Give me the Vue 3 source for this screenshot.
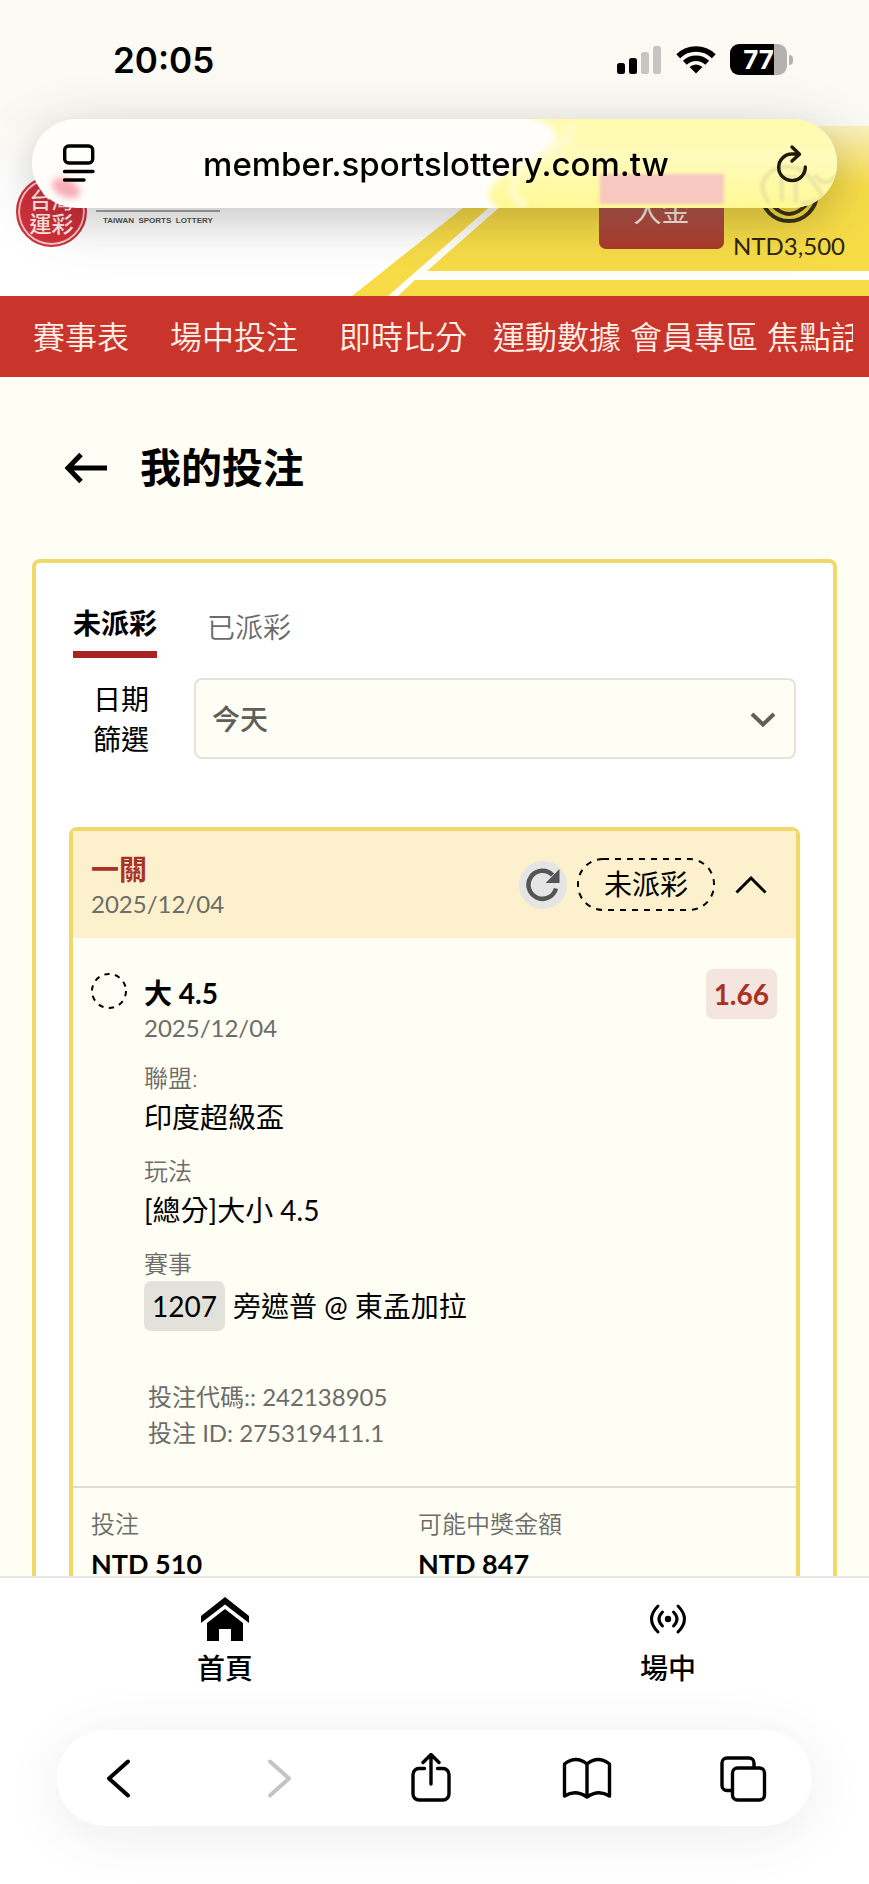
<script setup>
import { ref } from 'vue'

const navItems = [
  { label: '賽事表', space: 'wide' },
  { label: '場中投注', space: 'wide' },
  { label: '即時比分', space: 'medium' },
  { label: '運動數據', space: 'tight' },
  { label: '會員專區', space: 'tight' },
  { label: '焦點話題', space: 'tight' }
]

const tabs = ['未派彩', '已派彩']
const activeTab = ref('未派彩')
const dateRange = ref('今天')

const details = [
  { term: '聯盟:', value: '印度超級盃' },
  { term: '玩法', value: '[總分]大小 4.5' },
  { term: '賽事', code: '1207', value: '旁遮普 @ 東孟加拉' }
]

const amounts = [
  { label: '投注', value: 'NTD 510' },
  { label: '可能中獎金額', value: 'NTD 847' }
]
</script>

<template>
  <div class="screen">
    <div class="browser-top">
      <div class="status">
        <span class="clock">20:05</span>
        <div class="status-icons">
          <svg width="46" height="28" viewBox="0 0 46 28" aria-hidden="true">
            <rect x="1" y="17" width="8" height="11" rx="2.5" />
            <rect x="13" y="12" width="8" height="16" rx="2.5" />
            <rect x="25" y="6" width="8" height="22" rx="2.5" fill="#c6c5c1" />
            <rect x="37" y="0" width="8" height="28" rx="2.5" fill="#c6c5c1" />
          </svg>
          <svg width="40" height="29" viewBox="0 0 40 29" aria-hidden="true">
            <g fill="none" stroke="#000" stroke-width="5.4">
              <path d="M2.2 11.2a25.5 25.5 0 0 1 35.6 0" />
              <path d="M8.8 17.8a16 16 0 0 1 22.4 0" />
            </g>
            <path d="M20 28.6l-6.4-6.5a9.200 9.200 0 0 1 12.800 0z" />
          </svg>
          <div class="battery">
            <span class="battery-body">77</span>
            <span class="battery-cap"></span>
          </div>
        </div>
      </div>
      <div class="address">
        <svg class="address-tint" viewBox="0 0 804 89" preserveAspectRatio="xMaxYMid slice" aria-hidden="true">
          <defs>
            <filter id="soft" x="-20%" y="-20%" width="140%" height="140%"><feGaussianBlur stdDeviation="3" /></filter>
            <filter id="edge" x="-10%" y="-20%" width="120%" height="140%"><feGaussianBlur stdDeviation="1.5" /></filter>
            <linearGradient id="tint" x1="0" y1="0" x2="0" y2="1">
              <stop offset="0" stop-color="#fffaa8" />
              <stop offset=".45" stop-color="#fffcbc" />
              <stop offset="1" stop-color="#fff88e" />
            </linearGradient>
          </defs>
          <rect width="804" height="89" fill="#fffefb" />
          <g filter="url(#soft)">
            <path d="M478-8C530 6 534 18 508 34C490 48 455 58 456 78L470 98H820V-8z" fill="url(#tint)" />
            <path d="M535 4c18 16-46 40-54 60c-3 12 4 18 12 24" fill="none" stroke="#fffcd0" stroke-width="7" />
            <ellipse cx="34" cy="69" rx="15" ry="9" fill="#f8aeb8" transform="rotate(25 34 69)" />
          </g>
          <path d="M567 55h124v30H567z" fill="#f8c8c0" filter="url(#edge)" />
          <g fill="none" stroke="#e8e2a0" stroke-width="3.500" filter="url(#edge)">
            <path d="M736 84c-16-22 2-38 22-36c16 2 24 18 32 30c-4 6-14 6-22 6M749 82V58h14v26M782 56q10 14 22 0" />
          </g>
        </svg>
        <button class="icon-button page-button" type="button" aria-label="Page menu">
          <svg width="34" height="40" viewBox="0 0 34 40" fill="none" stroke="#000" stroke-width="3.400" stroke-linecap="round">
            <rect x="2.700" y="2" width="28" height="17" rx="4" />
            <path d="M2.500 27.500h28.500M2.500 36h19.500" />
          </svg>
        </button>
        <span class="url">member.sportslottery.com.tw</span>
        <button class="icon-button" type="button" aria-label="Reload">
          <svg width="32" height="40" viewBox="0 0 32 40" fill="none" stroke="#201a08" stroke-width="3.400" stroke-linecap="round" stroke-linejoin="round">
            <path d="M22.500 10H16A13.300 13.300 0 1 0 29.300 23M16 3l7.500 7.200L16 17" />
          </svg>
        </button>
      </div>
    </div>

    <header class="site-header">
      <svg class="banner" viewBox="0 0 869 170" preserveAspectRatio="xMaxYMax slice" aria-hidden="true">
        <path d="M352 170L566 0H869V170z" fill="#f7dc48" />
        <path d="M388 170L582 0H592L427 145H869V154H415L398 170z" fill="#fffef8" />
      </svg>
      <a class="brand" href="#">
        <span class="seal"><span>台灣</span><span>運彩</span></span>
        <span class="brand-name">TAIWAN&nbsp; SPORTS&nbsp; LOTTERY</span>
      </a>
      <div class="account">
        <button class="deposit" type="button">入金</button>
        <a class="balance" href="#">
          <svg width="60" height="60" viewBox="0 0 60 60" fill="none" stroke="#3c3413" stroke-width="4" aria-hidden="true">
            <circle cx="30" cy="30" r="28" />
            <path d="M13 42q17 18 34 0" />
          </svg>
          <span>NTD3,500</span>
        </a>
      </div>
    </header>

    <nav class="site-nav">
      <div class="site-nav-list">
        <a v-for="item in navItems" :key="item.label" href="#" :class="item.space">{{ item.label }}</a>
      </div>
    </nav>

    <main class="page">
      <div class="page-title">
        <button class="icon-button" type="button" aria-label="返回">
          <svg width="44" height="32" viewBox="0 0 44 32" fill="none" stroke="#000" stroke-width="5">
            <path d="M17 2.500L4 16l13 13.500M4 16h39" />
          </svg>
        </button>
        <h1>我的投注</h1>
      </div>

      <section class="card">
        <div class="tabs" role="tablist">
          <button
            v-for="tab in tabs"
            :key="tab"
            type="button"
            role="tab"
            :aria-selected="tab === activeTab"
            :class="['tab', { active: tab === activeTab }]"
            @click="activeTab = tab"
          >{{ tab }}</button>
        </div>

        <div class="filter">
          <label for="date-range">日期<br />篩選</label>
          <div class="select">
            <select id="date-range" v-model="dateRange">
              <option>今天</option>
              <option>昨天</option>
            </select>
            <svg width="26" height="16" viewBox="0 0 26 16" fill="none" stroke="#5e5e5a" stroke-width="4" aria-hidden="true">
              <path d="M2 2l11 10.500L24 2" />
            </svg>
          </div>
        </div>

        <article class="bet">
          <header class="bet-head">
            <div class="bet-name">
              <h2>一關</h2>
              <time>2025/12/04</time>
            </div>
            <button class="icon-button refresh" type="button" aria-label="重新整理">
              <svg width="34" height="34" viewBox="0 0 34 34">
                <path d="M30 20.500A14 14 0 1 1 26.500 7" fill="none" stroke="#555" stroke-width="4.500" />
                <path d="M33.500 1v14H19.500z" fill="#555" />
              </svg>
            </button>
            <span class="state">
              <svg class="state-outline" width="138" height="53" viewBox="0 0 138 53" fill="none" stroke="#000" stroke-width="2" stroke-dasharray="6 6" aria-hidden="true">
                <rect x="1" y="1" width="136" height="51" rx="25" />
              </svg>
              未派彩
            </span>
            <button class="icon-button collapse" type="button" aria-label="收合">
              <svg width="32" height="18" viewBox="0 0 32 18" fill="none" stroke="#000" stroke-width="3">
                <path d="M1.500 16.500L16 2l14.500 14.500" />
              </svg>
            </button>
          </header>

          <div class="bet-body">
            <svg class="pending" width="36" height="36" viewBox="0 0 36 36" fill="none" stroke="#000" stroke-width="2" aria-hidden="true">
              <circle cx="18" cy="18" r="17" stroke-dasharray="5.350 5.350" />
            </svg>
            <div class="bet-info">
              <h3>大 4.5</h3>
              <time>2025/12/04</time>
              <dl>
                <div v-for="row in details" :key="row.term">
                  <dt>{{ row.term }}</dt>
                  <dd :class="{ coded: row.code }"><span v-if="row.code" class="code">{{ row.code }}</span>{{ row.value }}</dd>
                </div>
              </dl>
              <p class="refs">投注代碼:: 242138905<br />投注 ID: 275319411.1</p>
            </div>
            <span class="odds">1.66</span>
          </div>

          <footer class="bet-foot">
            <div v-for="amount in amounts" :key="amount.label">
              <span>{{ amount.label }}</span>
              <strong>{{ amount.value }}</strong>
            </div>
          </footer>
        </article>
      </section>
    </main>

    <div class="bottom">
      <nav class="app-nav">
        <a href="#">
          <svg width="50" height="46" viewBox="0 0 50 46" aria-hidden="true">
            <path d="M1 20L25 1l24 19v7L25 8.500L1 27z" />
            <path d="M25 13L43 27v18H31V33H19v12H7V27z" />
          </svg>
          <span>首頁</span>
        </a>
        <a href="#">
          <svg width="50" height="46" viewBox="0 0 50 46" fill="none" stroke="#000" stroke-width="3" stroke-linecap="round" aria-hidden="true">
            <circle cx="25" cy="23" r="3.200" fill="#000" stroke="none" />
            <path d="M19.500 16q-7 7 0 14M30.500 16q7 7 0 14M15 10q-13 13 0 26M35 10q13 13 0 26" />
          </svg>
          <span>場中</span>
        </a>
      </nav>
      <div class="toolbar">
        <button class="icon-button" type="button" aria-label="Back">
          <svg width="50" height="50" viewBox="0 0 50 50" fill="none" stroke="#000" stroke-width="4" stroke-linecap="round" stroke-linejoin="round"><path d="M35 8.500L16 25.500l19 17" /></svg>
        </button>
        <button class="icon-button" type="button" aria-label="Forward" disabled>
          <svg width="50" height="50" viewBox="0 0 50 50" fill="none" stroke="#c4c4c4" stroke-width="4" stroke-linecap="round" stroke-linejoin="round"><path d="M21 8.500l19 17l-19 17" /></svg>
        </button>
        <button class="icon-button" type="button" aria-label="Share">
          <svg width="50" height="50" viewBox="0 0 50 50" fill="none" stroke="#000" stroke-width="3.400" stroke-linecap="round" stroke-linejoin="round">
            <path d="M18.500 15.500h-5.500a6 6 0 0 0-6 6V41a6 6 0 0 0 6 6h24a6 6 0 0 0 6-6V21.500a6 6 0 0 0-6-6h-5.500M25 31V2M17 9.500l8-8l8 8" />
          </svg>
        </button>
        <button class="icon-button" type="button" aria-label="Bookmarks">
          <svg width="50" height="50" viewBox="0 0 50 50" fill="none" stroke="#000" stroke-width="3.400" stroke-linejoin="round">
            <path d="M25 11q-11-9-22.500 0V43q11-7 22.500 1q11.500-8 22.500-1V11Q36 2 25 11zM25 11v33" />
          </svg>
        </button>
        <button class="icon-button" type="button" aria-label="Tabs">
          <svg width="50" height="50" viewBox="0 0 50 50" fill="none" stroke="#000" stroke-width="3.400" stroke-linejoin="round">
            <rect x="14.500" y="15" width="32" height="32" rx="5" />
            <path d="M14.500 37.500H9A5 5 0 0 1 4 32.500V10a5 5 0 0 1 5-5h22a5 5 0 0 1 5 5v5" />
          </svg>
        </button>
      </div>
    </div>
  </div>
</template>

<style>
body {
  margin: 0;
  background: #fffef5;
}
</style>

<style scoped>
* {
  box-sizing: border-box;
}

.screen {
  position: relative;
  display: flex;
  flex-direction: column;
  height: 100vh;
  overflow: hidden;
  background: #fffef5;
  color: #000;
  font-family: Lato, "Noto Sans CJK TC", sans-serif;
  font-size: 28px;
}

a {
  color: inherit;
  text-decoration: none;
}

button,
select {
  font: inherit;
  color: inherit;
}

h1,
h2,
h3,
p,
dl,
dd {
  margin: 0;
}

svg {
  display: block;
}

.icon-button {
  flex: none;
  padding: 0;
  border: 0;
  background: none;
}

/* Browser chrome over the page */
.browser-top {
  position: absolute;
  inset: 0 0 auto;
  z-index: 2;
  padding: 0 32px;
  background: linear-gradient(#fbfaf3, #fbf9f3 126px, transparent 126px);
  font-family: Inter, sans-serif;
}

.status {
  display: flex;
  align-items: center;
  justify-content: space-between;
  height: 119px;
  padding: 0 44px 0 81px;
}

.clock {
  font-size: 35px;
  font-weight: 600;
}

.status-icons {
  display: flex;
  align-items: center;
  gap: 14px;
}

.battery {
  display: flex;
  align-items: center;
  gap: 2px;
}

.battery-body {
  width: 57px;
  border-radius: 9px;
  background: linear-gradient(90deg, #000 77%, #b3b2ae 77%);
  color: #fff;
  font-size: 26px;
  font-weight: 700;
  line-height: 31px;
  text-align: center;
}

.battery-cap {
  width: 4px;
  height: 10px;
  border-radius: 0 5px 5px 0;
  background: #b3b2ae;
}

.address {
  position: relative;
  display: flex;
  align-items: center;
  justify-content: space-between;
  height: 89px;
  padding: 0 29px 0 30px;
  border-radius: 45px;
  box-shadow: 0 12px 60px rgba(0, 0, 0, 0.17), 0 14px 32px rgba(0, 0, 0, 0.07);
}

.address > * {
  position: relative;
}

.address .address-tint {
  position: absolute;
  inset: 0;
  width: 100%;
  height: 100%;
  border-radius: 45px;
}

.url {
  font-size: 33px;
  font-weight: 500;
  line-height: 40px;
}

/* Site header */
.site-header {
  position: relative;
  display: flex;
  flex: none;
  align-items: flex-end;
  justify-content: space-between;
  height: 170px;
  margin-top: 126px;
  padding: 0 24px 31px 16px;
  background: #fff;
}

.banner {
  position: absolute;
  inset: 0;
  width: 100%;
  height: 100%;
}

.site-header::after {
  position: absolute;
  inset: 0 0 auto;
  height: 60px;
  background: linear-gradient(rgba(250, 248, 240, 0.7), rgba(250, 248, 240, 0));
  content: "";
}

.brand,
.account {
  position: relative;
  display: flex;
}

.brand {
  align-items: center;
  gap: 9px;
  margin-bottom: 18px;
}

.seal {
  display: flex;
  flex-direction: column;
  align-items: center;
  justify-content: center;
  width: 71px;
  height: 71px;
  border: 2px solid #d0303a;
  border-radius: 50%;
  background: #d0303a;
  box-shadow: inset 0 0 0 2px #f3c4c4;
  color: #ffe9e6;
  font-size: 22px;
  font-weight: 500;
  line-height: 24px;
}

.brand-name {
  padding: 2px 7px 0;
  border-top: 2px solid #a5a5a5;
  margin-top: 14px;
  color: #555;
  font-family: "Liberation Sans", sans-serif;
  font-size: 8px;
  font-weight: 700;
  line-height: 14px;
}

.account {
  align-items: flex-end;
  gap: 9px;
}

.deposit {
  width: 125px;
  height: 76px;
  margin-bottom: 16px;
  padding: 0;
  border: 0;
  border-radius: 7px;
  background: linear-gradient(#b25c50 40%, #ab3a2c);
  color: #fbe9df;
  line-height: 76px;
}

.balance {
  display: flex;
  flex-direction: column;
  align-items: center;
  color: #2c260e;
  font-size: 24px;
  line-height: 30px;
}

.balance svg {
  margin-bottom: 8px;
}

.balance span {
  margin-bottom: 4px;
}

/* Red navigation */
.site-nav {
  flex: none;
  padding: 0 16px 0 33px;
  background: #c9352b;
}

.site-nav-list {
  display: flex;
  overflow: hidden;
  color: #fff0e8;
  font-size: 32px;
  font-weight: 350;
  line-height: 81px;
  white-space: nowrap;
}

.site-nav a {
  flex: none;
}

.wide {
  margin-right: 41px;
}

.medium {
  margin-right: 26px;
}

.tight {
  margin-right: 9px;
}

/* Page */
.page {
  flex: 1;
  min-height: 0;
  overflow: hidden;
  padding: 0 32px;
}

.page-title {
  display: flex;
  align-items: center;
  gap: 32px;
  height: 182px;
  padding-left: 32px;
}

h1 {
  font-size: 41px;
  font-weight: 700;
  line-height: 60px;
}

.card {
  padding: 40px 33px;
  border: 4px solid #f0d968;
  border-radius: 8px;
  background: #fff;
}

.tabs {
  display: flex;
  align-items: flex-end;
  gap: 50px;
  padding: 0 4px;
}

.tab {
  padding: 0 0 11px;
  border: 0;
  background: none;
  color: #6b6b6b;
  font-weight: 350;
  line-height: 40px;
}

.tab.active {
  padding-bottom: 8px;
  border-bottom: 7px solid #a82424;
  color: #000;
  font-weight: 700;
}

.filter {
  display: flex;
  align-items: center;
  gap: 45px;
  margin-top: 20px;
  padding: 0 4px 0 24px;
}

.filter label {
  flex: none;
  line-height: 40px;
}

.select {
  position: relative;
  flex: 1;
}

.select select {
  width: 100%;
  height: 81px;
  padding: 0 16px;
  border: 2px solid #e4e3da;
  border-radius: 8px;
  appearance: none;
  background: #fffef5;
  color: #5e5e5a;
  font-weight: 500;
}

.select svg {
  position: absolute;
  top: 34px;
  right: 20px;
  pointer-events: none;
}

.bet {
  margin-top: 68px;
  border: 4px solid #f0d968;
  border-radius: 8px;
  background: #fffef5;
}

.bet-head {
  display: flex;
  align-items: center;
  height: 107px;
  padding: 0 29px 0 18px;
  background: #fcf1cc;
}

.bet-name {
  flex: 1;
}

h2 {
  color: #a93226;
  font-size: 28px;
  font-weight: 700;
  line-height: 38px;
}

time {
  display: block;
  color: #6c6c68;
  font-size: 24px;
  line-height: 32px;
}

.refresh {
  display: grid;
  place-items: center;
  width: 48px;
  height: 48px;
  border-radius: 50%;
  background: #e5e5e5;
}

.state {
  position: relative;
  width: 138px;
  margin: 0 20px 0 10px;
  line-height: 53px;
  text-align: center;
}

.state-outline {
  position: absolute;
  inset: 0;
}

.bet-body {
  display: flex;
  align-items: flex-start;
  padding: 31px 19px 35px 18px;
}

.pending {
  flex: none;
  margin: 4px 17px 0 0;
}

.bet-info {
  flex: 1;
  padding-top: 5px;
}

h3 {
  font-size: 28px;
  font-weight: 700;
  line-height: 38px;
}

dl {
  display: grid;
  gap: 15px;
  margin-top: 17px;
}

dt {
  color: #6c6c68;
  font-size: 24px;
  font-weight: 350;
  line-height: 34px;
}

dd {
  line-height: 44px;
}

dd.coded {
  display: flex;
  align-items: center;
  gap: 8px;
  line-height: 50px;
}

.code {
  padding: 0 8px;
  border-radius: 7px;
  background: #e3e2da;
}

.refs {
  margin-top: 48px;
  padding-left: 4px;
  color: #6c6c68;
  font-size: 24px;
  line-height: 36px;
}

.odds {
  flex: none;
  padding: 0 8px;
  border-radius: 7px;
  background: #f4e5df;
  color: #a93226;
  font-weight: 700;
  line-height: 50px;
}

.bet-foot {
  display: grid;
  grid-template-columns: 327px 1fr;
  padding: 18px;
  border-top: 2px solid #deddd5;
}

.bet-foot span,
.bet-foot strong {
  display: block;
}

.bet-foot span {
  color: #6c6c68;
  font-size: 24px;
  font-weight: 350;
  line-height: 36px;
}

.bet-foot strong {
  font-size: 27px;
  line-height: 44px;
}

/* Bottom navigation and browser toolbar */
.bottom {
  flex: none;
  padding-bottom: 58px;
  border-top: 2px solid #e6e5e2;
  background: #fff;
}

.app-nav {
  display: grid;
  grid-template-columns: 450fr 419fr;
  height: 152px;
}

.app-nav a {
  display: flex;
  flex-direction: column;
  align-items: center;
  padding-top: 18px;
  font-weight: 500;
  line-height: 40px;
}

.app-nav a + a {
  padding-left: 17px;
}

.app-nav span {
  margin-top: 6px;
}

.toolbar {
  display: flex;
  align-items: center;
  justify-content: space-between;
  height: 96px;
  margin: 0 57px;
  padding: 0 44px 0 36px;
  border-radius: 48px;
  background: #fff;
  box-shadow: 0 8px 60px rgba(0, 0, 0, 0.08);
}
</style>
